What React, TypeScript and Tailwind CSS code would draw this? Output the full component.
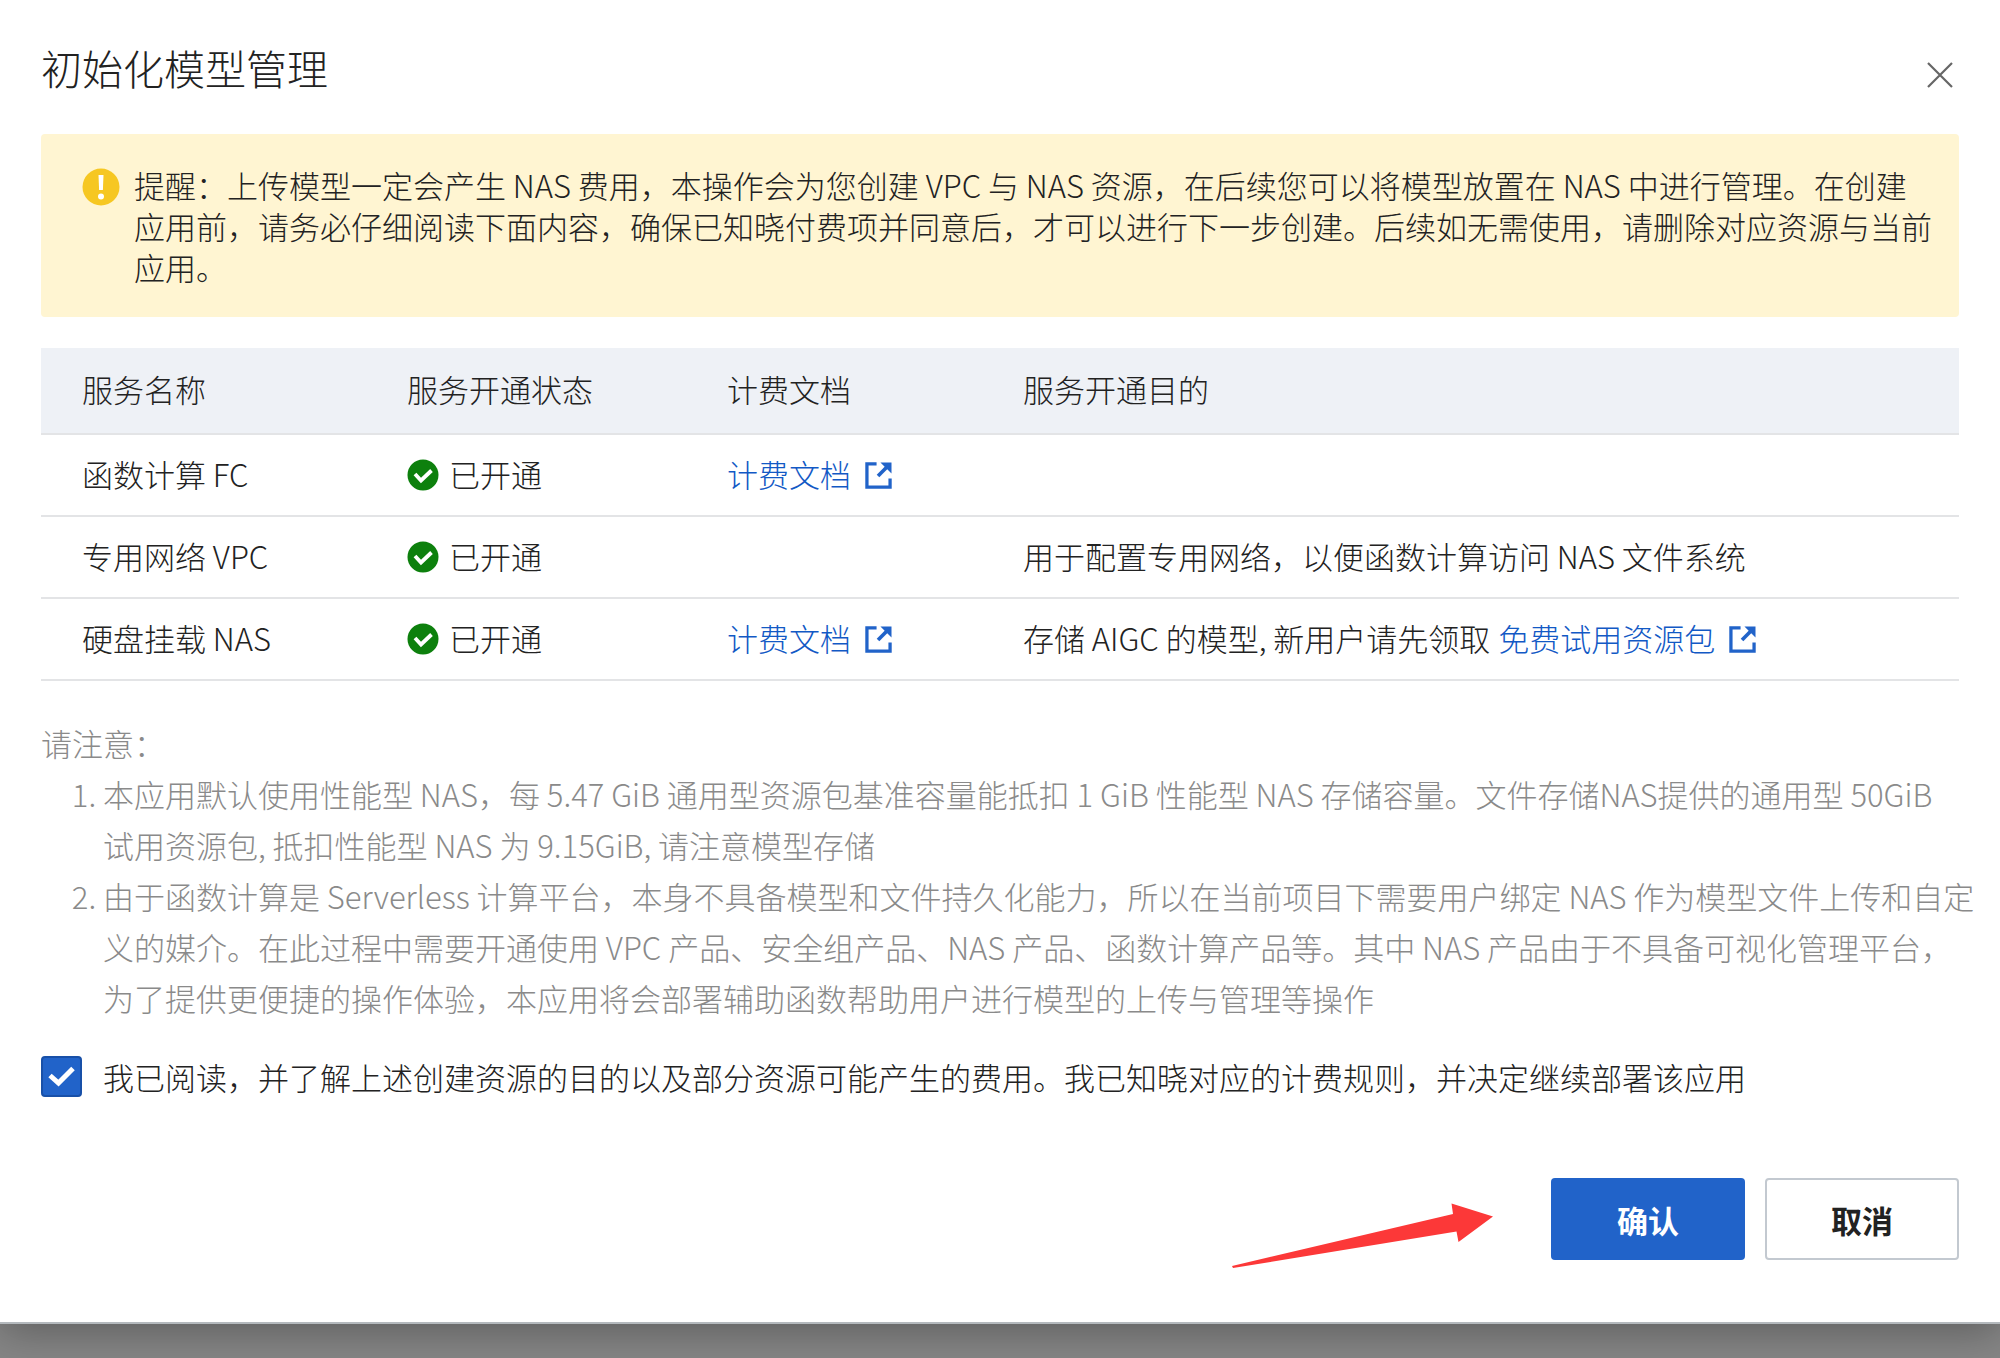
import type { ReactNode } from 'react';

interface Service {
  name: string;
  doc?: boolean;
  purpose?: ReactNode;
}

function ExternalIcon() {
  return (
    <svg viewBox="0 0 28 28" className="mt-1 h-[27px] w-[27px] shrink-0" fill="none" aria-hidden="true">
      <path d="M12 2H2v24h24V17" stroke="#2163c9" strokeWidth="3.4" />
      <path d="M13.500 14.500 23 5" stroke="#2163c9" strokeWidth="3.8" />
      <path d="M16 0.500h11.500V12z" fill="#2163c9" />
    </svg>
  );
}

function CheckCircle() {
  return (
    <svg viewBox="0 0 32 32" className="mt-1 h-8 w-8 shrink-0" fill="none" aria-hidden="true">
      <circle cx="16" cy="16" r="15.5" fill="#0d800d" />
      <path d="m8 15 6 6.500L24.500 11.500" stroke="#fff" strokeWidth="3.8" />
    </svg>
  );
}

function DocLink({ children }: { children: ReactNode }) {
  return (
    <a href="#" className="inline-flex items-center gap-3.5 text-[#1259c5]">
      {children}
      <ExternalIcon />
    </a>
  );
}

const services: Service[] = [
  { name: '函数计算 FC', doc: true },
  { name: '专用网络 VPC', purpose: '用于配置专用网络，以便函数计算访问 NAS 文件系统' },
  {
    name: '硬盘挂载 NAS',
    doc: true,
    purpose: (
      <span className="inline-flex items-center gap-2">
        存储 AIGC 的模型, 新用户请先领取
        <DocLink>免费试用资源包</DocLink>
      </span>
    ),
  },
];

export default function App() {
  return (
    <div className="min-h-screen bg-[#868686] font-['Noto_Sans_CJK_SC',sans-serif] text-[31px] leading-[41px] font-light text-[#222]">
      <div role="dialog" aria-labelledby="title" className="border-b-2 border-[#b4b9bd] bg-white px-[41px] pt-[37px] pb-[62px] shadow-[0_8px_40px_rgba(0,0,0,0.3)]">
        <header className="flex items-end justify-between">
          <h1 id="title" className="text-[41px] leading-[60px]">初始化模型管理</h1>
          <button type="button" aria-label="关闭" className="px-1.5 pb-[9px]">
            <svg viewBox="0 0 26 26" className="h-[26px] w-[26px]" aria-hidden="true">
              <path d="m1 1 24 24M25 1 1 25" stroke="#666" strokeWidth="2.2" />
            </svg>
          </button>
        </header>

        <div className="mt-[37px] flex items-start gap-3.5 rounded bg-[#fff5d2] pt-[30px] pr-6 pb-[30px] pl-[41px]">
          <svg viewBox="0 0 38 38" className="mt-1 h-[38px] w-[38px] shrink-0" aria-hidden="true">
            <circle cx="19" cy="19" r="18.500" fill="#f6c722" />
            <path d="M16.500 7h5l-.6 15h-3.800z" fill="#fff" />
            <circle cx="19" cy="28.500" r="3" fill="#fff" />
          </svg>
          <p>
            提醒：上传模型一定会产生 NAS 费用，本操作会为您创建 VPC 与 NAS 资源，在后续您可以将模型放置在 NAS 中进行管理。在创建<br />
            应用前，请务必仔细阅读下面内容，确保已知晓付费项并同意后，才可以进行下一步创建。后续如无需使用，请删除对应资源与当前<br />
            应用。
          </p>
        </div>

        <table className="mt-[31px] w-full table-fixed border-collapse text-left">
          <colgroup>
            <col className="w-[325px]" />
            <col className="w-80" />
            <col className="w-[296px]" />
            <col />
          </colgroup>
          <thead>
            <tr className="h-[86px] border-b-2 border-[#e3e4e6] bg-[#eef1f6]">
              <th className="pb-1 pl-[41px] font-light">服务名称</th>
              <th className="pb-1 pl-[41px] font-light">服务开通状态</th>
              <th className="pb-1 pl-[41px] font-light">计费文档</th>
              <th className="pb-1 pl-[41px] font-light">服务开通目的</th>
            </tr>
          </thead>
          <tbody>
            {services.map((service) => (
              <tr key={service.name} className="h-[82px] border-b-2 border-[#e3e4e6]">
                <td className="pb-1 pl-[41px]">{service.name}</td>
                <td className="pb-1 pl-[41px]">
                  <span className="flex items-center gap-2.5">
                    <CheckCircle />
                    已开通
                  </span>
                </td>
                <td className="pb-1 pl-[41px]">{service.doc && <DocLink>计费文档</DocLink>}</td>
                <td className="pb-1 pl-[41px]">{service.purpose}</td>
              </tr>
            ))}
          </tbody>
        </table>

        <section className="mt-9 -mr-8 leading-[51px] text-[#8a8a8a]">
          <p>请注意：</p>
          <ol className="list-decimal pl-[62px]">
            <li>
              本应用默认使用性能型 NAS，每 5.47 GiB 通用型资源包基准容量能抵扣 1 GiB 性能型 NAS 存储容量。文件存储NAS提供的通用型 50GiB<br />
              试用资源包, 抵扣性能型 NAS 为 9.15GiB, 请注意模型存储
            </li>
            <li>
              由于函数计算是 Serverless 计算平台，本身不具备模型和文件持久化能力，所以在当前项目下需要用户绑定 NAS 作为模型文件上传和自定<br />
              义的媒介。在此过程中需要开通使用 VPC 产品、安全组产品、NAS 产品、函数计算产品等。其中 NAS 产品由于不具备可视化管理平台，<br />
              为了提供更便捷的操作体验，本应用将会部署辅助函数帮助用户进行模型的上传与管理等操作
            </li>
          </ol>
        </section>

        <label className="mt-[33px] flex items-center gap-[21px]">
          <span className="grid shrink-0">
            <input
              type="checkbox"
              defaultChecked
              className="peer col-start-1 row-start-1 h-[41px] w-[41px] appearance-none rounded border-2 border-[#999] checked:border-[#1850a8] checked:bg-[#2163c9]"
            />
            <svg viewBox="0 0 41 41" className="pointer-events-none invisible col-start-1 row-start-1 h-[41px] w-[41px] peer-checked:visible" fill="none" aria-hidden="true">
              <path d="m9 19.500 8.500 7.500L32 12.500" stroke="#fff" strokeWidth="5" />
            </svg>
          </span>
          我已阅读，并了解上述创建资源的目的以及部分资源可能产生的费用。我已知晓对应的计费规则，并决定继续部署该应用
        </label>

        <footer className="mt-[81px] flex items-end justify-end gap-5">
          <svg viewBox="0 0 264 82" className="mr-9 h-[82px] w-[264px] overflow-visible" aria-hidden="true">
            <path d="M1 88 222 36 220.500 25.500 262 38.500 227.500 64 225.500 53.500 2 90z" fill="#fc3838" />
          </svg>
          <button type="button" className="h-[82px] w-[194px] rounded bg-[#2163c9] font-bold text-white">确认</button>
          <button type="button" className="h-[82px] w-[194px] rounded border-2 border-[#c3c9d0] bg-white font-bold">取消</button>
        </footer>
      </div>
    </div>
  );
}
